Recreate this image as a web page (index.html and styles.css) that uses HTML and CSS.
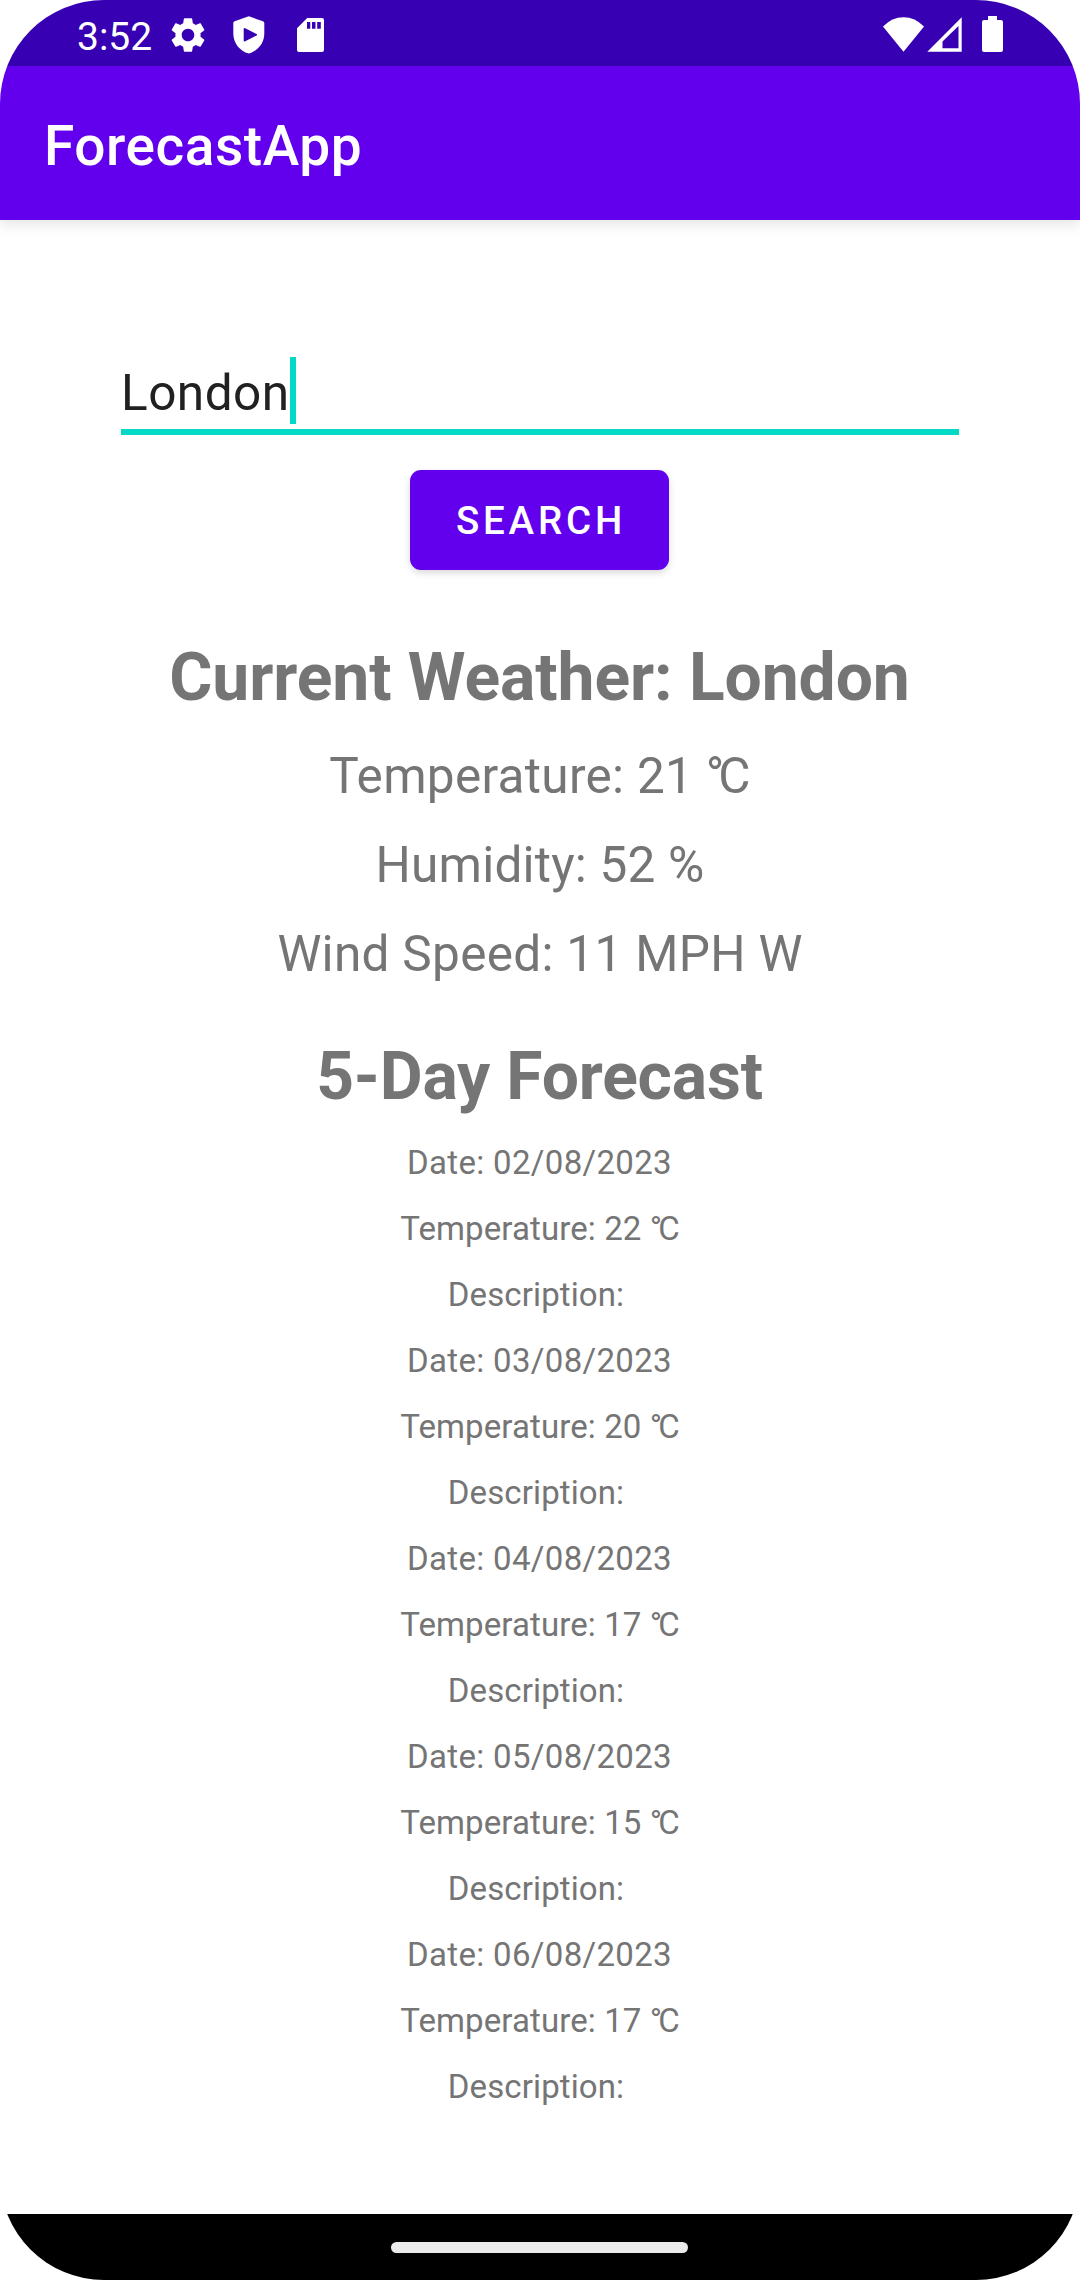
FILE: index.html
```html
<!DOCTYPE html>
<html lang="en">
<head>
<meta charset="utf-8">
<title>ForecastApp</title>
<link rel="stylesheet" href="styles.css">
</head>
<body>
<div class="screen">
  <header class="status-bar">
    <span class="clock">3:52</span>
    <svg class="icon-settings" width="42" height="42" viewBox="0 0 24 24"><path fill="#fff" d="M19.14 12.94c.04-.3.06-.61.06-.94 0-.32-.02-.64-.07-.94l2.03-1.58c.18-.14.23-.41.12-.61l-1.92-3.32c-.12-.22-.37-.29-.59-.22l-2.39.96c-.5-.38-1.03-.7-1.62-.94l-.36-2.54c-.04-.24-.24-.41-.48-.41h-3.84c-.24 0-.43.17-.47.41l-.36 2.54c-.59.24-1.13.57-1.62.94l-2.39-.96c-.22-.08-.47 0-.59.22L2.74 8.87c-.12.21-.08.47.12.61l2.03 1.58c-.05.3-.09.63-.09.94s.02.64.07.94l-2.03 1.58c-.18.14-.23.41-.12.61l1.92 3.32c.12.22.37.29.59.22l2.39-.96c.5.38 1.03.7 1.62.94l.36 2.54c.05.24.24.41.48.41h3.84c.24 0 .44-.17.47-.41l.36-2.54c.59-.24 1.13-.56 1.62-.94l2.39.96c.22.08.47 0 .59-.22l1.92-3.32c.12-.22.07-.47-.12-.61l-2.01-1.58zM12 15.6c-1.98 0-3.6-1.62-3.6-3.6s1.62-3.6 3.6-3.6 3.6 1.62 3.6 3.6-1.62 3.6-3.6 3.6z"/></svg>
    <svg class="icon-shield" width="32" height="38" viewBox="0 0 32 38"><path fill="#fff" fill-rule="evenodd" d="M15.8 .3 30 5.300Q31.300 5.800 31.300 7V17.500C31.300 27 25 35 15.800 37.600 6.600 35 .3 27 .3 17.500V7Q.3 5.800 1.600 5.300ZM10.700 13V24.500Q10.700 26 12.200 25.300L23.500 19.500Q24.800 18.700 23.500 18L12.200 12.200Q10.700 11.500 10.700 13Z"/></svg>
    <svg class="icon-sd" width="27" height="34" viewBox="0 0 27 34"><path fill="#fff" fill-rule="evenodd" d="M10.200 0H25q2 0 2 2V32q0 2-2 2H2q-2 0-2-2V10.200ZM10 4v6.700h3.300V4ZM15 4v6.700h3.500V4ZM20.200 4v6.700h3.600V4Z"/></svg>
    <span class="spacer"></span>
    <svg class="icon-wifi" width="42" height="35" viewBox="0 0 42 35"><path fill="#fff" d="M0 9.500Q9 .3 20.500 .3T41 9.500L20.500 34.700Z"/></svg>
    <svg class="icon-signal" width="35" height="35" viewBox="0 0 35 35"><path fill="#fff" fill-rule="evenodd" d="M.3 34.700 34.700 .3V34.700ZM15.500 24.500V31.300H31.500V9Z"/></svg>
    <svg class="icon-battery" width="21" height="36" viewBox="0 0 21 36"><path fill="#fff" d="M6 0h9v4h4q2 0 2 2v28q0 2-2 2H2q-2 0-2-2V6q0-2 2-2h4Z"/></svg>
  </header>
  <div class="app-bar"><h1 class="app-title">ForecastApp</h1></div>
  <main class="content">
    <div class="field"><span class="field-text">London</span><span class="caret"></span></div>
    <button class="search" type="button">SEARCH</button>
    <section class="current">
      <h2 class="heading">Current Weather: London</h2>
      <p class="reading">Temperature: 21 <span class="degree">°</span>C</p>
      <p class="reading humidity">Humidity: 52 %</p>
      <p class="reading">Wind Speed: 11 MPH W</p>
    </section>
    <section class="forecast">
      <h2 class="heading">5-Day Forecast</h2>
      <p class="entry date">Date: 02/08/2023</p>
      <p class="entry">Temperature: 22 <span class="degree">°</span>C</p>
      <p class="entry description">Description:</p>
      <p class="entry date">Date: 03/08/2023</p>
      <p class="entry">Temperature: 20 <span class="degree">°</span>C</p>
      <p class="entry description">Description:</p>
      <p class="entry date">Date: 04/08/2023</p>
      <p class="entry">Temperature: 17 <span class="degree">°</span>C</p>
      <p class="entry description">Description:</p>
      <p class="entry date">Date: 05/08/2023</p>
      <p class="entry">Temperature: 15 <span class="degree">°</span>C</p>
      <p class="entry description">Description:</p>
      <p class="entry date">Date: 06/08/2023</p>
      <p class="entry">Temperature: 17 <span class="degree">°</span>C</p>
      <p class="entry description">Description:</p>
    </section>
  </main>
  <footer class="nav-bar"><span class="nav-handle"></span></footer>
</div>
</body>
</html>
```
FILE: styles.css
```css
* { box-sizing: border-box; }
body { margin: 0; background: #fff; font-family: Roboto, sans-serif; }
h1, h2, p { margin: 0; }
svg { display: block; flex: none; }

.screen {
  display: flex;
  flex-direction: column;
  width: 1080px;
  height: 2280px;
  overflow: hidden;
  border-radius: 104px;
  background: #fff;
}

.status-bar {
  display: flex;
  align-items: flex-start;
  flex: none;
  height: 66px;
  padding: 0 77px;
  background: #3700b3;
}
.clock { width: 90px; font-size: 39px; line-height: 46px; padding-top: 14px; color: #fff; white-space: nowrap; }
.icon-settings { margin-top: 14px; }
.icon-shield { margin: 16px 0 0 24px; }
.icon-sd { margin: 18px 0 0 32px; }
.spacer { flex: 1; }
.icon-wifi { margin: 17px 2px 0 0; }
.icon-signal { margin: 17px 20px 0 0; }
.icon-battery { margin-top: 16px; }

.app-bar {
  display: flex;
  align-items: center;
  flex: none;
  height: 154px;
  padding: 5px 44px 0;
  background: #6200ee;
  box-shadow: 0 5px 12px rgba(0, 0, 0, .1);
}
.app-title { font-size: 55px; font-weight: 500; line-height: 64px; letter-spacing: .55px; color: #fff; }

.content {
  display: flex;
  flex: 1;
  flex-direction: column;
  align-items: center;
  padding-top: 137px;
}
.field {
  display: flex;
  width: 838px;
  height: 78px;
  border-bottom: 6px solid #03dac5;
}
.field-text { font-size: 49.500px; line-height: 72px; letter-spacing: .48px; color: #212121; }
.caret { width: 6px; height: 67px; background: #03dac5; }

.search {
  width: 259px;
  height: 100px;
  margin: 35px 1px 0 0;
  padding: 2px 0 0 3px;
  border: 0;
  border-radius: 11px;
  background: #6200ee;
  box-shadow: 0 3px 7px rgba(0, 0, 0, .15);
  color: #fff;
  font: 500 38.500px/98px Roboto, sans-serif;
  letter-spacing: 3.800px;
}

.current { margin-top: 63px; }
.forecast { margin-top: 32px; }
.heading { padding-right: 1px; font-size: 66px; font-weight: 700; line-height: 90px; letter-spacing: -.08px; color: #757575; text-align: center; }
.current .heading { margin-bottom: 9px; }
.forecast .heading { margin: 1px 0 8px; letter-spacing: -.18px; }
.reading { font-size: 49.500px; line-height: 89px; letter-spacing: .3px; color: #757575; text-align: center; }
.humidity { letter-spacing: .2px; }
.entry { font-size: 33px; line-height: 66px; letter-spacing: .1px; color: #757575; text-align: center; }
.date { padding-right: 1px; letter-spacing: .33px; }
.description { padding-right: 8px; }
.degree { letter-spacing: -.12em; }

.nav-bar {
  display: flex;
  justify-content: center;
  align-items: center;
  flex: none;
  height: 66px;
  padding-right: 1px;
  background: #000;
}
.nav-handle { width: 297px; height: 11px; border-radius: 6px; background: #ebebeb; }
```
